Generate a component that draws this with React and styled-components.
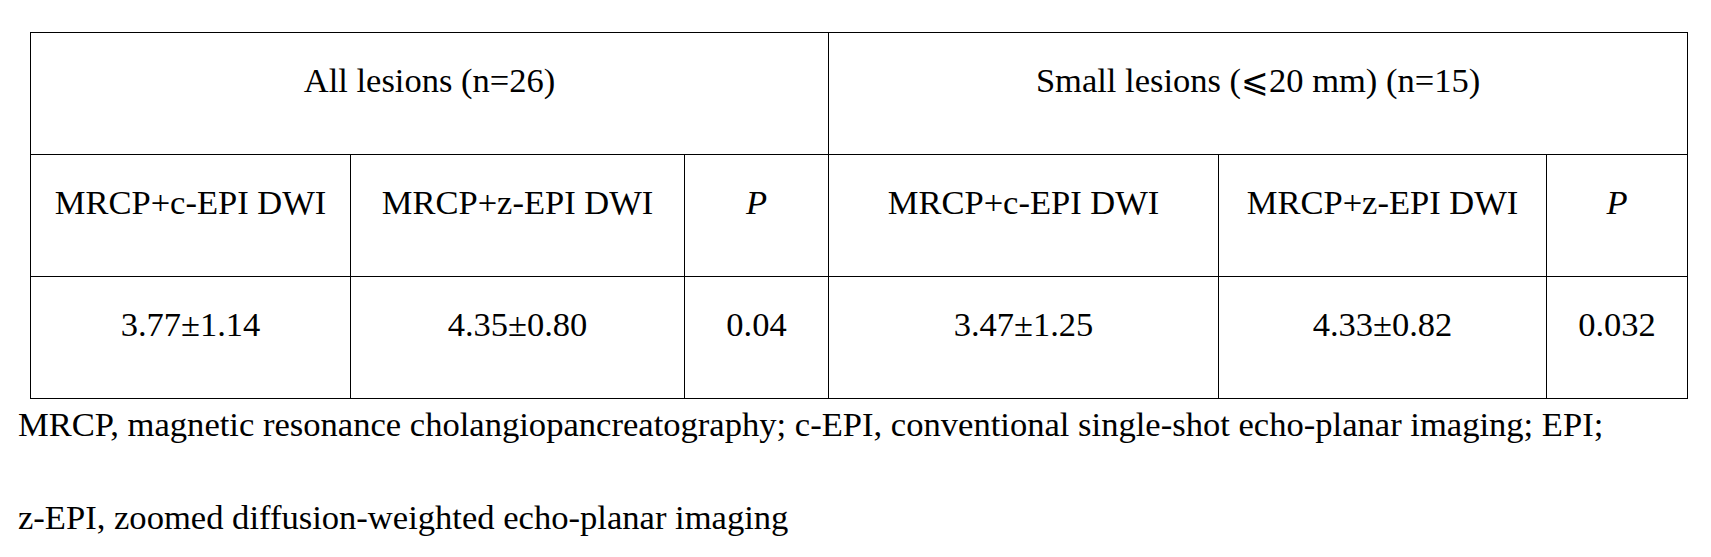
import React from "react";
import styled, { createGlobalStyle } from "styled-components";

const serif = `"Liberation Serif", "Times New Roman", Times, serif`;

const Global = createGlobalStyle`
  html, body { margin: 0; padding: 0; background: #fff; }
  body { font-family: ${serif}; color: #000; }
`;

const Page = styled.div`
  padding: 32px 0 0 0;
  width: 1711px;
  height: 557px;
  box-sizing: border-box;
  overflow: hidden;
  font-family: ${serif};
`;

const Table = styled.table`
  margin-left: 30px;
  border-collapse: collapse;
  table-layout: fixed;
  width: 1657px;
  font-family: ${serif};
`;

const Col = styled.col`
  width: ${(p) => p.$w}px;
`;

const Cell = styled.td`
  border: 1px solid #000;
  height: 122px;
  box-sizing: border-box;
  padding: 27px 0 0 0;
  vertical-align: top;
  text-align: center;
  font-family: ${serif};
  font-size: 34.5px;
  line-height: 40px;
  white-space: nowrap;
  font-style: ${(p) => (p.$italic ? "italic" : "normal")};
`;

const Symbol = styled.span`
  font-family: "DejaVu Serif", "DejaVu Sans", serif;
  font-size: 33px;
  font-weight: 300;
`;

const Notes = styled.div`
  padding: 5px 0 0 18px;
  display: flex;
  flex-direction: column;
  gap: 53px;
`;

const Note = styled.p`
  margin: 0;
  font-family: ${serif};
  font-size: 34.6px;
  line-height: 40px;
  white-space: nowrap;
`;

const widths = [320, 334, 144, 390, 328, 141];
const methods = ["MRCP+c-EPI DWI", "MRCP+z-EPI DWI"];
const values = ["3.77±1.14", "4.35±0.80", "0.04", "3.47±1.25", "4.33±0.82", "0.032"];

export default function App() {
  return (
    <Page>
      <Global />
      <Table>
        <colgroup>
          {widths.map((w, i) => (
            <Col key={i} $w={w} />
          ))}
        </colgroup>
        <tbody>
          <tr>
            <Cell colSpan={3}>All lesions (n=26)</Cell>
            <Cell colSpan={3}>
              Small lesions (<Symbol>⩽</Symbol>20 mm) (n=15)
            </Cell>
          </tr>
          <tr>
            {methods.map((m) => (
              <Cell key={"a" + m}>{m}</Cell>
            ))}
            <Cell $italic>P</Cell>
            {methods.map((m) => (
              <Cell key={"b" + m}>{m}</Cell>
            ))}
            <Cell $italic>P</Cell>
          </tr>
          <tr>
            {values.map((v) => (
              <Cell key={v}>{v}</Cell>
            ))}
          </tr>
        </tbody>
      </Table>
      <Notes>
        <Note>
          MRCP, magnetic resonance cholangiopancreatography; c-EPI, conventional single-shot echo-planar imaging; EPI;
        </Note>
        <Note>z-EPI, zoomed diffusion-weighted echo-planar imaging</Note>
      </Notes>
    </Page>
  );
}
